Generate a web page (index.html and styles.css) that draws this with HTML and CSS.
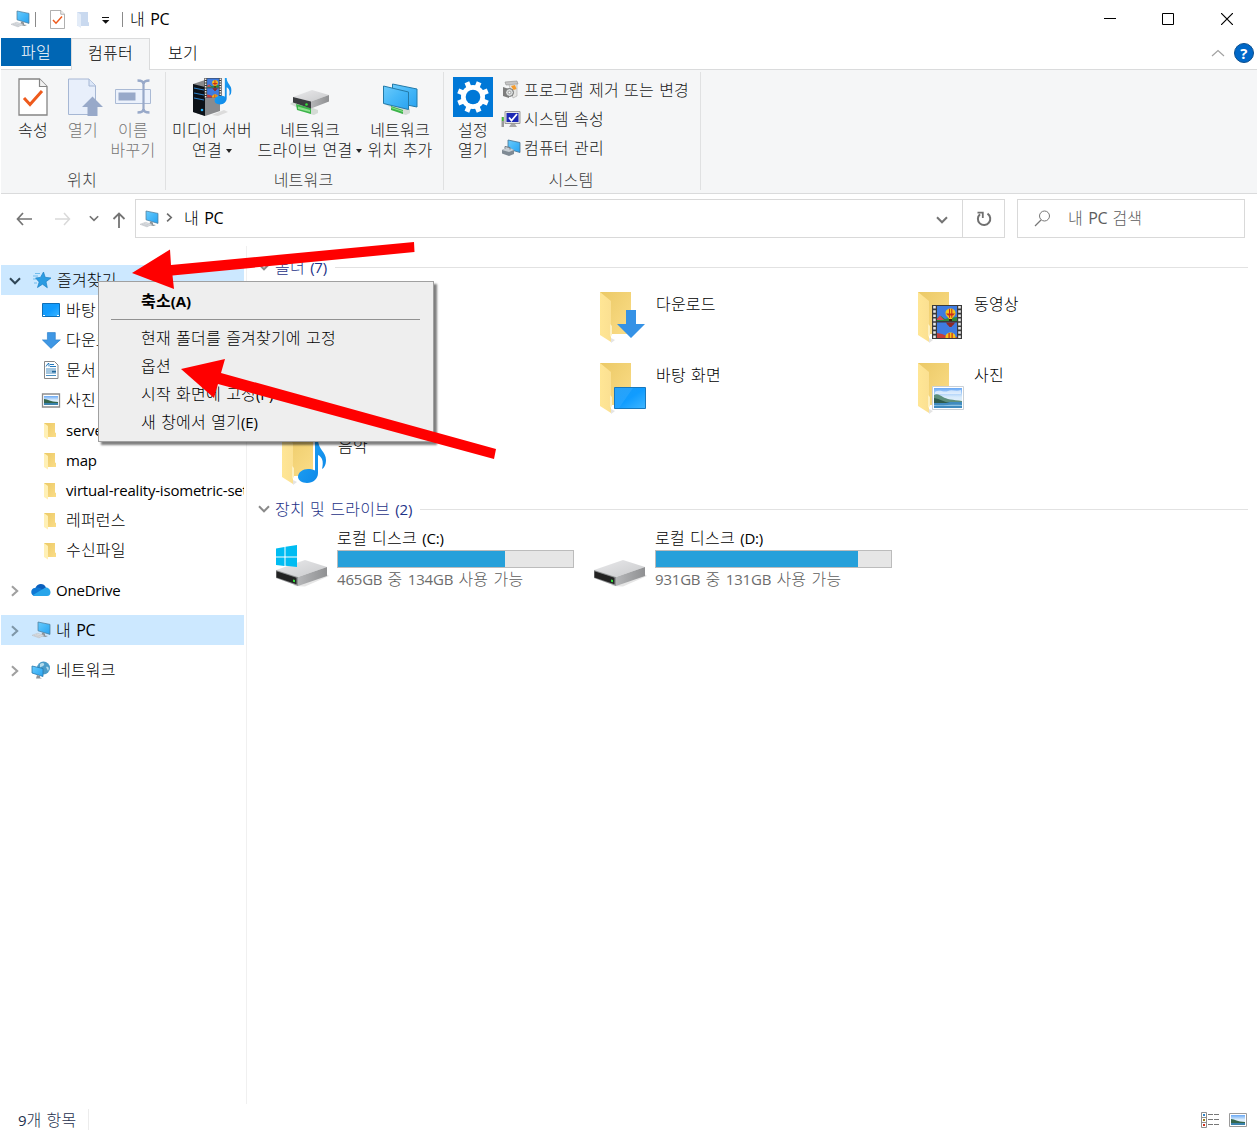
FILE: index.html
```
<!DOCTYPE html>
<html lang="ko">
<head>
    <meta charset="UTF-8">
    <meta name="viewport" content="width=device-width, initial-scale=1.0">
    <title>내 PC</title>
    <link rel="stylesheet" href="styles.css">
</head>
<body>
    <!-- shared icons -->
    <svg class="defs" width="0" height="0">
        <defs>
            <linearGradient id="gFolder" x1="0" y1="0" x2="1" y2="1"><stop offset="0" stop-color="#ebc966"/><stop offset="1" stop-color="#fbdd88"/></linearGradient>
            <linearGradient id="gFlap" x1="0" y1="0" x2="1" y2="0"><stop offset="0" stop-color="#ffe695"/><stop offset="1" stop-color="#fbe092"/></linearGradient>
            <linearGradient id="gScreen" x1="0" y1="0" x2="1" y2="1"><stop offset="0" stop-color="#6ccbfb"/><stop offset=".5" stop-color="#45b7f8"/><stop offset="1" stop-color="#2ba3f0"/></linearGradient>
            <linearGradient id="gDesk" x1="0" y1="0" x2="1" y2="1"><stop offset="0" stop-color="#169bf6"/><stop offset=".5" stop-color="#109cff"/><stop offset="1" stop-color="#3fb6ff"/></linearGradient>
            <linearGradient id="gTop" x1="0" y1="0" x2="1" y2="1"><stop offset="0" stop-color="#e9e9eb"/><stop offset="1" stop-color="#c9cacc"/></linearGradient>
            <linearGradient id="gSide" x1="0" y1="0" x2="1" y2="0"><stop offset="0" stop-color="#b5b6b8"/><stop offset="1" stop-color="#8f9092"/></linearGradient>
            <linearGradient id="gSky" x1="0" y1="0" x2="0" y2="1"><stop offset="0" stop-color="#6aa9f5"/><stop offset=".45" stop-color="#d8ebfb"/><stop offset="1" stop-color="#eef6fb"/></linearGradient>
            <linearGradient id="gNote" x1="0" y1="0" x2="1" y2="1"><stop offset="0" stop-color="#23a7f7"/><stop offset="1" stop-color="#0a84e6"/></linearGradient>
        </defs>
        <symbol id="pc" viewBox="0 0 20 18">
            <path d="M7 1l12 2.4v10L7 9.8z" fill="url(#gScreen)" stroke="#4a7896" stroke-width=".7"/>
            <path d="M11 11.500l3 1v2l3 .6-2.500.9-4-1z" fill="#8d9499"/>
            <path d="M1 14.300l5.500-2 6.500 2-5 2.600z" fill="#dfe2e5" stroke="#b4b9be" stroke-width=".5"/>
            <path d="M3 14.300l6 1.800M5 13.600l6 1.600" stroke="#b4b9be" stroke-width=".5"/>
        </symbol>
        <symbol id="folder" viewBox="0 0 14 18">
            <path d="M1 1h11v9.500l1 .5v4H1z" fill="url(#gFolder)"/>
            <path d="M1 1l4 3v13.500L1 15z" fill="#fff0b5"/>
        </symbol>
        <symbol id="folder-big" viewBox="0 0 48 52">
            <path d="M1 1h31v42H1z" fill="url(#gFolder)"/>
            <path d="M12 52l4-3-4-2z" fill="#e4e4e4"/>
            <path d="M1 1l11 9v41L1 44z" fill="url(#gFlap)"/>
            <path d="M11 33l2 2v9l-2 2z" fill="#fdf0c0"/>
        </symbol>
        <symbol id="picture" viewBox="0 0 32 24">
            <path d="M.5.5h31v23H.5z" fill="#fff" stroke="#c9d0d6"/>
            <path d="M2 2h28v20H2z" fill="url(#gSky)"/>
            <path d="M3 6c5-3 9 1 13-1s8 1 13-1v4H3z" fill="#fff" opacity=".6"/>
            <path d="M2 9c3-2 6 0 9 2s10 3 19 4v2H2z" fill="#5c8f7c"/>
            <path d="M2 16h28v6H2z" fill="#3f8bc0"/>
            <path d="M2 19c8 1 18-1 28 0v1H2z" fill="#8fc3e2"/>
            <path d="M2 12c6 1 10 4 16 5H2z" fill="#2d5b4c"/>
        </symbol>
        <symbol id="film" viewBox="0 0 30 34">
            <path d="M0 0h30v34H0z" fill="#3a3a3a"/>
            <path d="M2.500 1v32M27.500 1v32" stroke="#e8e8e8" stroke-width="2.600" stroke-dasharray="2.600 1.600"/>
            <path d="M5 1h20v15H5zM5 17.500h20V33H5z" fill="#3f7be0"/>
            <path d="M5 13l4-2 4 3 4-1 8-1v4H5z" fill="#2f8a3b"/>
            <path d="M5 14l3-3.500 4 4.500H5z" fill="#d8465a"/>
            <path d="M5 28l5 1 5 2 10 1v1H5z" fill="#c63d3a"/>
            <path d="M13.500 8c0-6 10-6 10 0 0 3-3 4-3.500 6h-3c-.5-2-3.500-3-3.500-6z" fill="#f5c518"/>
            <path d="M17 3.700h1v9h-1zM19.300 3.700h1v9h-1zM14 8.500h9l-2 2h-5z" fill="#c9281f"/><path d="M17 14h3v2h-3z" fill="#402010"/>
            <path d="M14 17.500h9c-1 2.500-3 3-3.500 4.500h-2c-.5-1.500-2.500-2-3.500-4.500z" fill="#8d2a25"/>
            <path d="M13.500 32c0-6 10-6 10 0v1h-10z" fill="#f5c518"/><path d="M16.500 28h1.200v5h-1.200zM19.500 28h1.200v5h-1.200z" fill="#c9281f"/>
        </symbol>
        <symbol id="note" viewBox="0 0 28 44">
            <path d="M17 0h3c0 9 8 12 8 20 0 5-2 8-4 9 2-8 0-12-4-14v18c0 6-5 10-11 10-5 0-9-3-9-6 0-5 5-8 10-8 3 0 6 .6 7 1.500z" fill="url(#gNote)"/>
        </symbol>
        <symbol id="drive" viewBox="0 0 54 28">
            <path d="M18 27l12 .5L54 17l-4-3z" fill="#e6e6e6"/>
            <path d="M1 11L30 1l22 7-29 10z" fill="url(#gTop)"/>
            <path d="M52 8v9L23 27v-9z" fill="url(#gSide)"/>
            <path d="M1 11l22 7v9L1 19z" fill="#8f9193"/>
            <path d="M1.500 12.300l20 6.400v6.500L1.500 18.500z" fill="#222"/>
            <path d="M18 20.500l2 .6v2.200l-2-.6z" fill="#36e03c"/>
        </symbol>
        <symbol id="down" viewBox="0 0 28 28">
            <path d="M9 0h10v14h9L14 28 0 14h9z" fill="#3592e6"/>
        </symbol>
        <symbol id="check-doc" viewBox="0 0 30 38">
            <path d="M1 1h20.500L29 8.500V37H1z" fill="#fff" stroke="#858585" stroke-width="1.300"/>
            <path d="M21.500 1v7.500H29" fill="#f2f2f2" stroke="#858585" stroke-width="1.200"/>
            <path d="M6 20l6 6.500L24 13" fill="none" stroke="#ee5a1c" stroke-width="3"/>
        </symbol>
        <symbol id="chev" viewBox="0 0 10 16"><path d="M1.500 2.500L7.500 8l-6 5.500" fill="none" stroke="currentColor" stroke-width="2.400"/></symbol>
        <symbol id="chev-down" viewBox="0 0 12 8"><path d="M1 1.300l5 5 5-5" fill="none" stroke="currentColor" stroke-width="2"/></symbol>
    </svg>

    <div class="window">
        <div class="titlebar">
            <svg class="t-pc" width="20" height="18"><use href="#pc"/></svg>
            <span class="t-sep"></span>
            <svg class="t-doc" width="15" height="19"><use href="#check-doc"/></svg>
            <svg class="t-folder" width="13" height="17" viewBox="0 0 13 17"><path d="M1 1h11v10l1 .5V15H1z" fill="#c9d9ef"/><path d="M1 1l4 2.500V17l-4-2.500z" fill="#e3ecf8"/></svg>
            <svg class="t-more" width="8" height="7" viewBox="0 0 8 7"><path d="M0 .5h7" stroke="#111"/><path d="M0 3h7.400L3.700 6.700z" fill="#111"/></svg>
            <span class="t-sep"></span>
            <span class="t-name">내 <span class="en pc">PC</span></span>
            <div class="controls">
                <svg width="12" height="12"><path d="M0 5.500h12" stroke="#000"/></svg>
                <svg width="12" height="12"><path d="M.5.5h11v11H.5z" fill="none" stroke="#000"/></svg>
                <svg class="close" width="12" height="12"><path d="M0 0l12 12M12 0L0 12" stroke="#000" stroke-width="1.200"/></svg>
            </div>
        </div>

        <div class="tabs">
            <div class="tab file">파일</div>
            <div class="tab active">컴퓨터</div>
            <div class="tab">보기</div>
            <div class="tabs-right">
                <svg width="14" height="8" viewBox="0 0 14 8"><path d="M1 7l6-5.500L13 7" fill="none" stroke="#a2a2a2" stroke-width="1.200"/></svg>
                <span class="help">?</span>
            </div>
        </div>

        <div class="ribbon">
            <div class="group g-place">
                <div class="buttons">
                    <div class="btn"><svg width="30" height="38"><use href="#check-doc"/></svg><span>속성</span></div>
                    <div class="btn off">
                        <svg class="open-doc" width="36" height="38" viewBox="0 0 36 38"><path d="M1.500 1h20.500L28.500 7.500V36.500h-27z" fill="#e8effb" stroke="#a6b7d4"/><path d="M22 1v7h6.500" fill="#dce7f8" stroke="#a6b7d4"/><path d="M25.500 18.500L36 29h-5.500v9H20.500V29H15z" fill="#98a9c9"/></svg>
                        <span>열기</span>
                    </div>
                    <div class="btn off">
                        <svg width="38" height="38" viewBox="0 0 38 38"><path d="M1.500 11.500h35v14h-35z" fill="#ecf2fc" stroke="#aabad5"/><path d="M4.500 14.500h17v8h-17z" fill="#98a9c9"/><path d="M29.500 5v29" stroke="#98a9c9" stroke-width="2.200"/><path d="M23.500 2.500c3.500 0 6 1 6 3.500 0-2.500 2.500-3.500 6-3.500M23.500 34.500c3.500 0 6-1 6-3.500 0 2.500 2.500 3.500 6 3.500" fill="none" stroke="#98a9c9" stroke-width="2.600"/></svg>
                        <span>이름<br>바꾸기</span>
                    </div>
                </div>
                <div class="group-name">위치</div>
            </div>
            <div class="group g-net">
                <div class="buttons">
                    <div class="btn w90">
                        <svg width="40" height="38" viewBox="0 0 40 38">
                            <path d="M20 37l12-5 4 2-10 4z" fill="#dcdcdc"/>
                            <path d="M1 6l12-4 15 3v28l-15 5-12-4z" fill="#8a8b8e"/>
                            <path d="M1 6l12 3v29L1 34z" fill="#0d1218"/>
                            <path d="M2 10l10 2M2 15l10 2M2 20l10 2" stroke="#2b7fc7" stroke-width="1.200"/>
                            <circle cx="10" cy="32" r="1.300" fill="#29b6ff"/>
                            <svg x="12" y="0" width="18" height="20" viewBox="0 0 30 34"><use href="#film"/></svg>
                            <svg x="22" y="0" width="18" height="27" viewBox="0 0 28 44"><use href="#note"/></svg>
                        </svg>
                        <span>미디어 서버<br>연결<i class="caret"></i></span>
                    </div>
                    <div class="btn w106">
                        <svg width="42" height="38" viewBox="0 0 42 38">
                            <path d="M1 26l4-3 24 9v3l-4 2-4-1z" fill="#d4dbd5"/>
                            <path d="M7 26l15 4v6L8 32z" fill="#3cb44a"/><path d="M9 28.500l12 3.500v2L9 31z" fill="#8de08c"/>
                            <path d="M4 19l19-7 17 5-18 6.500z" fill="url(#gTop)"/><path d="M40 17v6.500l-18 7v-7z" fill="url(#gSide)"/><path d="M4 19l18 4.500v7L4 24.500z" fill="#3a3c3f"/><circle cx="17.500" cy="26.500" r="1.300" fill="#34e03a"/>
                        </svg>
                        <span>네트워크<br>드라이브 연결<i class="caret"></i></span>
                    </div>
                    <div class="btn w74">
                        <svg width="38" height="38" viewBox="0 0 38 38">
                            <path d="M2 25l4-2 23 8v4l-4 2-4-1z" fill="#d4dbd5"/>
                            <path d="M10 28l12 4v4l-12-4z" fill="#3cb44a"/><path d="M10 29l12 4v1l-12-4z" fill="#8de08c"/>
                            <path d="M11.500 6l24.500 5v18l-24.500-5z" fill="url(#gScreen)" stroke="#237aa8"/>
                            <path d="M2.500 8l25 6v17.500l-25-6z" fill="url(#gScreen)" stroke="#237aa8"/>
                        </svg>
                        <span>네트워크<br>위치 추가</span>
                    </div>
                </div>
                <div class="group-name">네트워크</div>
            </div>
            <div class="group g-sys">
                <div class="buttons">
                    <div class="btn gear">
                        <svg width="40" height="40" viewBox="-20 -20 40 40">
                            <path d="M-20-20h40v40h-40z" fill="#0078d7"/>
                            <path d="M0-16v32M-16 0h32M-11.300-11.300l22.600 22.600M-11.300 11.300l22.600-22.600" stroke="#fff" stroke-width="5" transform="rotate(22.500)"/>
                            <circle r="12" fill="#fff"/><circle r="7.300" fill="#0078d7"/>
                        </svg>
                        <span>설정<br>열기</span>
                    </div>
                    <div class="list">
                        <div class="line">
                            <svg width="20" height="20" viewBox="0 0 20 20"><path d="M4 2l12-1 1 3-12 1z" fill="#c6c6c6" stroke="#8e8e8e" stroke-width=".6"/><path d="M8 5l8-1v12l-4 2z" fill="#e5e5e3" stroke="#a9a9a9" stroke-width=".6"/><path d="M10 6l4-1 1.500 4-3 1z" fill="#f39a2d"/><path d="M2 7l6 2v9l-6-2z" fill="#7d7d7d"/><circle cx="8.500" cy="12.500" r="4" fill="#d6d9d9" stroke="#6e6e6e"/><circle cx="8.500" cy="12.500" r="1.300" fill="#fff" stroke="#777" stroke-width=".6"/></svg>
                            <span>프로그램 제거 또는 변경</span>
                        </div>
                        <div class="line">
                            <svg width="20" height="20" viewBox="0 0 20 20"><path d="M.5 8h2.500v10H.5z" fill="#9a9a9a"/><path d="M1 8h1.500v4H1z" fill="#3ec52f"/><path d="M4 2.500h15v12H4z" fill="#e4e4e4" stroke="#9b9b9b"/><path d="M5.500 4h12v9h-12z" fill="#1c28b4"/><path d="M8 8.500l2.500 3L16 5" fill="none" stroke="#fff" stroke-width="1.800"/><path d="M10 15h4l2 3H8z" fill="#a8a8a8"/></svg>
                            <span>시스템 속성</span>
                        </div>
                        <div class="line">
                            <svg width="20" height="20" viewBox="0 0 20 20"><path d="M7 2l12 2.500v10L7 11z" fill="url(#gScreen)" stroke="#47718f" stroke-width=".8"/><path d="M1 12l6-3 6 3v4l-5 2-7-2.500z" fill="#7f8a94"/><path d="M1 12l7 2 5-2-6-3z" fill="#c7ced4"/><path d="M4 10.500V8.500l5 1v2" fill="none" stroke="#6f7880"/></svg>
                            <span>컴퓨터 관리</span>
                        </div>
                    </div>
                </div>
                <div class="group-name">시스템</div>
            </div>
        </div>

        <div class="nav">
            <div class="nav-arrows">
                <svg width="16" height="14" viewBox="0 0 16 14"><path d="M7 1L1.500 7 7 13M1.500 7H16" fill="none" stroke="#747474" stroke-width="1.700"/></svg>
                <svg width="16" height="14" viewBox="0 0 16 14"><path d="M9 1l5.500 6L9 13M14.500 7H0" fill="none" stroke="#d9d9d9" stroke-width="1.500"/></svg>
                <svg class="recent" width="10" height="7"><use href="#chev-down"/></svg>
                <svg class="up" width="14" height="16" viewBox="0 0 14 16"><path d="M1.500 7L7 1.500 12.500 7M7 1.500V16" fill="none" stroke="#747474" stroke-width="1.800"/></svg>
            </div>
            <div class="address">
                <svg width="20" height="18"><use href="#pc"/></svg>
                <svg class="crumb" width="7" height="11"><use href="#chev"/></svg>
                <span class="path">내 <span class="en pc">PC</span></span>
                <svg class="drop" width="12" height="8"><use href="#chev-down"/></svg>
                <div class="refresh">
                    <svg width="16" height="16" viewBox="0 0 16 16"><path d="M11.500 2.700a6.200 6.200 0 1 1-7.500.5" fill="none" stroke="#707070" stroke-width="2"/><path d="M1.500 1.700h5.300v5.300" fill="none" stroke="#707070" stroke-width="1.800"/></svg>
                </div>
            </div>
            <div class="search">
                <svg width="17" height="17" viewBox="0 0 17 17"><circle cx="10.500" cy="6" r="5" fill="none" stroke="#777"/><path d="M7 10L1 16" stroke="#777" stroke-width="1.200"/></svg>
                <span>내 <span class="en pc">PC</span> 검색</span>
            </div>
        </div>

        <div class="content">
            <div class="sidebar">
                <div class="row top selected">
                    <svg class="open" width="12" height="8"><use href="#chev-down"/></svg>
                    <svg width="20" height="18" viewBox="0 0 20 18"><path d="M11.500 1l1.700 5.300 5.800.7-5 3.700 1.300 6-4.800-3.500-5 3.300L7.200 11 3.500 7l5-.6z" fill="#2b9ce2" stroke="#1b7fc4" stroke-width=".7"/><path d="M3 2.500h5M1 5h5M1 8h3M2 12h3" stroke="#5bb1e8" stroke-width=".8"/></svg>
                    <span>즐겨찾기</span>
                </div>
                <div class="row sub"><svg width="20" height="16" viewBox="0 0 20 16"><path d="M1.500 1.500h17v13h-17z" fill="url(#gDesk)" stroke="#0d6fb8"/><path d="M2 13.500h16" stroke="#fff" stroke-dasharray="2 12"/></svg><span>바탕 화면</span></div>
                <div class="row sub"><svg width="20" height="17" viewBox="0 0 28 28" preserveAspectRatio="none"><path d="M9 1h11v12h7L14 27 2 13h7z" fill="#3f97e4" stroke="#2a7fcc"/></svg><span>다운로드</span></div>
                <div class="row sub"><svg width="20" height="20" viewBox="0 0 20 20"><path d="M3.500 1.500h10l3.500 3.500v13.500H3.500z" fill="#fff" stroke="#878787"/><path d="M5 9h10M5 11h6M5 13h10M5 15.500h10" stroke="#4a8ec0"/><path d="M5 6.500L7 3.500h1v3M9 4.500h4M9 6.500h6" fill="none" stroke="#2378bd"/><path d="M11 10.500h4v2h-4z" fill="#23689c"/></svg><span>문서</span></div>
                <div class="row sub"><svg width="20" height="15" viewBox="0 0 20 15"><path d="M1.500 1h17v13h-17z" fill="#fff" stroke="#8d8d8d" stroke-width="1.300"/><path d="M3 3h14v9H3z" fill="url(#gSky)"/><path d="M3 6c4 0 6 3 14 3v1.500H3z" fill="#35664c"/><path d="M3 10h14v2H3z" fill="#3b83ad"/></svg><span>사진</span></div>
                <div class="row sub"><svg class="f" width="14" height="18"><use href="#folder"/></svg><span class="en">server</span></div>
                <div class="row sub"><svg class="f" width="14" height="18"><use href="#folder"/></svg><span class="en">map</span></div>
                <div class="row sub"><svg class="f" width="14" height="18"><use href="#folder"/></svg><span class="en">virtual-reality-isometric-set</span></div>
                <div class="row sub"><svg class="f" width="14" height="18"><use href="#folder"/></svg><span>레퍼런스</span></div>
                <div class="row sub"><svg class="f" width="14" height="18"><use href="#folder"/></svg><span>수신파일</span></div>
                <div class="row top gap">
                    <svg class="closed" width="10" height="14"><use href="#chev"/></svg>
                    <svg width="20" height="14" viewBox="0 0 20 14"><path d="M4.500 5C6 0 13-.5 15 4.500L10 9H1z" fill="#0a5fbd"/><path d="M4 5c3-1.200 5 0 7 1.200L6 13H4C-1 13-1 5 4 5z" fill="#0f78d4"/><path d="M11 6.500l4-2c5 0 6.500 8.500 1 8.500H5c-1.500 0-2.500-.5-3-1z" fill="#28a5ea"/></svg>
                    <span class="en">OneDrive</span>
                </div>
                <div class="row top gap selected">
                    <svg class="closed dark" width="10" height="14"><use href="#chev"/></svg>
                    <svg width="20" height="18"><use href="#pc"/></svg>
                    <span>내 <span class="en pc">PC</span></span>
                </div>
                <div class="row top gap">
                    <svg class="closed" width="10" height="14"><use href="#chev"/></svg>
                    <svg width="20" height="18" viewBox="0 0 20 18"><circle cx="12.500" cy="7" r="6.500" fill="#4b9cc9"/><path d="M9 3c2-2 5-1 4 1s-3 1-4 3zM15 6c2-1 4 1 2 4z" fill="#b4dcec"/><path d="M1 5l11 2.500v8L1 12z" fill="url(#gScreen)" stroke="#2679ad" stroke-width=".8"/><path d="M6 14l3 1v1.500l2 1H5z" fill="#8d9499"/></svg>
                    <span>네트워크</span>
                </div>
            </div>

            <div class="main">
                <div class="heading"><svg width="12" height="8"><use href="#chev-down"/></svg><span>폴더 <span class="en">(7)</span></span><hr></div>
                <div class="folders">
                    <div class="item c2"><svg width="50" height="52" viewBox="0 0 50 52"><svg width="48" height="52"><use href="#folder-big"/></svg><svg x="18" y="19" width="28" height="28"><use href="#down"/></svg></svg><span>다운로드</span></div>
                    <div class="item c3"><svg width="50" height="52" viewBox="0 0 50 52"><svg width="48" height="52"><use href="#folder-big"/></svg><svg x="15" y="14" width="30" height="34"><use href="#film"/></svg></svg><span>동영상</span></div>
                    <div class="item c2"><svg width="50" height="52" viewBox="0 0 50 52"><svg width="48" height="52"><use href="#folder-big"/></svg><path d="M15.500 25.500h31v21h-31z" fill="url(#gDesk)" stroke="#1878bd"/><path d="M16 26h18L20 46h-4z" fill="#fff" opacity=".08"/></svg><span>바탕 화면</span></div>
                    <div class="item c3"><svg width="50" height="52" viewBox="0 0 50 52"><svg width="48" height="52"><use href="#folder-big"/></svg><svg x="15" y="24" width="32" height="24"><use href="#picture"/></svg></svg><span>사진</span></div>
                    <div class="item c1"><svg width="50" height="52" viewBox="0 0 50 52"><svg width="48" height="52"><use href="#folder-big"/></svg><svg x="17" y="7" width="28" height="44"><use href="#note"/></svg></svg><span>음악</span></div>
                </div>
                <div class="heading second"><svg width="12" height="8"><use href="#chev-down"/></svg><span>장치 및 드라이브 <span class="en">(2)</span></span><hr></div>
                <div class="drives">
                    <div class="drive">
                        <svg width="54" height="42" viewBox="0 0 54 42"><svg y="14" width="54" height="28"><use href="#drive"/></svg><path d="M1 3.500L9.500 2v9.500H1zM10.500 1.800L22 0v11.500H10.500zM1 12.500h8.500V21L1 20zM10.500 12.500H22V22l-11.500-1.200z" fill="#00bcf2"/></svg>
                        <div class="info">
                            <div>로컬 디스크 <span class="en">(C:)</span></div>
                            <div class="bar"><div class="used" style="width: 71.2%"></div></div>
                            <div class="free"><span class="en">465GB</span> 중 <span class="en">134GB</span> 사용 가능</div>
                        </div>
                    </div>
                    <div class="drive">
                        <svg width="54" height="42" viewBox="0 0 54 42"><svg y="14" width="54" height="28"><use href="#drive"/></svg></svg>
                        <div class="info">
                            <div>로컬 디스크 <span class="en">(D:)</span></div>
                            <div class="bar"><div class="used" style="width: 86%"></div></div>
                            <div class="free"><span class="en">931GB</span> 중 <span class="en">131GB</span> 사용 가능</div>
                        </div>
                    </div>
                </div>
            </div>
        </div>

        <div class="status">
            <span class="count"><span class="en">9</span>개 항목</span>
            <div class="views">
                <svg width="18" height="16" viewBox="0 0 18 16"><path d="M.5.5h5v15h-5zM.5 5.500h5M.5 10.500h5" fill="#fff" stroke="#8f8f8f"/><path d="M2 2h2v2H2z" fill="#2f86c9"/><path d="M2 7h2v2H2z" fill="#9a7d1c"/><path d="M2 12h2v2H2z" fill="#d0311d"/><path d="M7 2.500h5M13 2.500h5M7 7.500h5M13 7.500h5M7 12.500h5M13 12.500h5" stroke="#777"/></svg>
                <svg width="18" height="14" viewBox="0 0 18 14"><path d="M.5.5h17v13H.5z" fill="#fff" stroke="#9a9a9a"/><path d="M2 2h14v10H2z" fill="url(#gSky)"/><path d="M2 6c4 0 6 3 14 3v1H2z" fill="#35664c"/><path d="M2 10h14v2H2z" fill="#3b83ad"/></svg>
            </div>
        </div>
    </div>

    <div class="menu">
        <div class="menu-item bold">축소<span class="en">(A)</span></div>
        <hr>
        <div class="menu-item">현재 폴더를 즐겨찾기에 고정</div>
        <div class="menu-item">옵션</div>
        <div class="menu-item">시작 화면에 고정<span class="en">(P)</span></div>
        <div class="menu-item">새 창에서 열기<span class="en">(E)</span></div>
    </div>

    <!-- red arrows over everything -->
    <svg class="arrows" width="1258" height="1135">
        <path d="M132 273l38-23.500 1 15.500L414 242l.5 10L172.500 275.500 174 289z" fill="#f00"/>
        <path d="M181 369l44-10-4 14 275 76-2 10-276-75-4 14z" fill="#f00"/>
    </svg>
</body>
</html>
```
FILE: styles.css
```
* {
    box-sizing: border-box;
}
body {
    margin: 0;
    font-family: "Noto Sans CJK KR", sans-serif;
    font-size: 16px;
    font-weight: 300;
    line-height: 20px;
    letter-spacing: 0.2px;
    word-spacing: 0.6px;
    color: #000;
    background-color: #fff;
    overflow: hidden;
}
svg {
    display: block;
    flex-shrink: 0;
}
.defs {
    position: absolute;
}
.en {
    font-family: "Open Sans", sans-serif;
    font-size: 15px;
    font-weight: 400;
    letter-spacing: -0.2px;
}
.en.pc {
    font-size: 16px;
    letter-spacing: -0.4px;
}
.window {
    display: flex;
    flex-direction: column;
    height: 1135px;
    padding: 0 1px;
    white-space: nowrap;
}

/* title bar */
.titlebar {
    display: flex;
    align-items: center;
    height: 38px;
    padding-left: 9px;
}
.t-sep {
    width: 1px;
    height: 15px;
    background-color: #8a8a8a;
}
.t-pc {
    margin-right: 5px;
}
.t-doc {
    margin-left: 14px;
}
.t-folder {
    margin-left: 11px;
}
.t-more {
    margin: 3px 12px 0 13px;
}
.t-name {
    margin-left: 7px;
    padding-bottom: 2px;
}
.controls {
    display: flex;
    gap: 46px;
    margin-left: auto;
    padding-right: 24px;
}
.close {
    margin-left: 1px;
}

/* tabs */
.tabs {
    display: flex;
    height: 32px;
    border-bottom: 1px solid #dadbdc;
}
.tab {
    height: 28px;
    line-height: 28px;
    padding: 0 18px;
}
.tab.file {
    width: 70px;
    padding: 0;
    line-height: 26px;
    text-align: center;
    color: #fff;
    background-color: #0066b4;
}
.tab.active {
    width: 79px;
    height: 32px;
    padding: 0;
    line-height: 26px;
    text-align: center;
    background-color: #f5f6f7;
    border: 1px solid #dadbdc;
    border-bottom: 0;
}
.tabs-right {
    display: flex;
    align-items: center;
    gap: 9px;
    height: 30px;
    margin-left: auto;
    padding-right: 3px;
}
.help {
    width: 20px;
    height: 20px;
    border: 1px solid #0b4f8f;
    border-radius: 50%;
    background-color: #0068c8;
    color: #fff;
    font: bold 15px/18px "Open Sans", sans-serif;
    text-align: center;
}

/* ribbon */
.ribbon {
    display: flex;
    height: 124px;
    padding-top: 2px;
    background-color: #f5f6f7;
    border-bottom: 1px solid #dadbdc;
    color: #1a1a1a;
}
.group {
    display: flex;
    flex-direction: column;
    height: 118px;
    border-right: 1px solid #e0e1e2;
}
.g-place {
    width: 165px;
}
.g-net {
    width: 278px;
}
.g-sys {
    width: 257px;
}
.buttons {
    display: flex;
    height: 97px;
    padding: 6px 0 0 7px;
}
.g-net .buttons {
    padding-left: 1px;
}
.g-sys .buttons {
    padding-left: 6px;
}
.btn {
    display: flex;
    flex-direction: column;
    align-items: center;
    width: 50px;
    text-align: center;
}
.btn span {
    margin-top: 3px;
}
.btn.off {
    color: #757575;
}
.open-doc {
    margin-left: 4px;
}
.btn.w90 {
    width: 90px;
}
.btn.w106 {
    width: 106px;
}
.btn.w74 {
    width: 74px;
}
.btn.gear {
    width: 46px;
    margin-top: -1px;
}
.btn.gear span {
    margin-top: 2px;
}
.caret {
    display: inline-block;
    margin: 0 0 3px 4px;
    border: 3.5px solid transparent;
    border-top: 4px solid #262626;
    border-bottom: 0;
}
.list {
    padding-left: 5px;
}
.line {
    display: flex;
    align-items: center;
    gap: 3px;
    height: 29px;
}
.line:first-child {
    margin-top: -3px;
}
.line span {
    padding-bottom: 2px;
}
.group-name {
    padding-right: 2px;
    text-align: center;
    color: #3c3c3c;
}

/* address row */
.nav {
    display: flex;
    height: 52px;
    padding: 5px 12px 0 0;
}
.nav-arrows {
    display: flex;
    align-items: center;
    width: 134px;
    height: 39px;
    padding-left: 15px;
    gap: 23px;
}
.recent {
    margin-left: -5px;
    color: #747474;
}
.up {
    margin: 2px 0 0 -10px;
}
.address {
    display: flex;
    align-items: center;
    width: 870px;
    height: 39px;
    padding-left: 3px;
    border: 1px solid #d9d9d9;
}
.crumb {
    margin: 0 11px 3px 7px;
    color: #6b6b6b;
}
.path,
.search span {
    padding-bottom: 2px;
}
.path .en,
.search .en {
    padding: 0;
}
.drop {
    margin: 2px 14px 0 auto;
    color: #747474;
}
.refresh {
    display: flex;
    align-items: center;
    width: 42px;
    height: 37px;
    padding-left: 13px;
    border-left: 1px solid #d9d9d9;
}
.search {
    display: flex;
    align-items: center;
    gap: 17px;
    flex: 1;
    height: 39px;
    margin-left: 12px;
    padding-left: 16px;
    border: 1px solid #d9d9d9;
    color: #5d5d5d;
}

/* content */
.content {
    display: flex;
    height: 858px;
}
.sidebar {
    width: 246px;
    padding: 19px 2px 0 0;
    border-right: 1px solid #f0f0f0;
}
.row {
    display: flex;
    align-items: center;
    height: 30px;
    overflow: hidden;
}
.row > span {
    margin-left: 5px;
    padding-bottom: 2px;
}
.row > .en {
    padding-bottom: 0;
}
.row.top {
    padding-left: 8px;
}
.row.sub {
    padding-left: 40px;
}
.row.gap {
    margin-top: 10px;
}
.row.selected {
    background-color: #cce8ff;
}
.open {
    margin: 2px 11px 0 0;
    color: #2f4657;
}
.closed {
    margin: 2px 11px 0 1px;
    color: #a0a0a0;
}
.closed.dark {
    color: #7f97a8;
}
.f {
    margin: 1px 4px 0 2px;
}
.main {
    flex: 1;
    padding: 11px 9px 0 11px;
}
.heading {
    display: flex;
    align-items: center;
    height: 20px;
    color: #1e3287;
}
.heading > span {
    padding-bottom: 2px;
}
.heading svg {
    margin-right: 5px;
    color: #8a8a8a;
}
.heading hr {
    flex: 1;
    height: 1px;
    margin: 0 0 0 8px;
    border: 0;
    background-color: #e2e2e2;
}
.folders {
    display: grid;
    grid-template-columns: repeat(3, 318px);
    grid-auto-rows: 71px;
    padding: 14px 0 0 23px;
}
.item {
    display: flex;
    gap: 7px;
}
.item span {
    margin-top: 2px;
}
.c1 {
    grid-column: 1;
}
.c2 {
    grid-column: 2;
}
.c3 {
    grid-column: 3;
}
.heading.second {
    margin-top: -5px;
}
.drives {
    display: flex;
    padding: 8px 0 0 17px;
}
.drive {
    display: flex;
    gap: 8px;
    width: 318px;
}
.drive > svg {
    margin-top: 18px;
}
.info {
    width: 237px;
}
.bar {
    height: 18px;
    margin: 2px 0 0;
    border: 1px solid #bcbcbc;
    background-color: #e6e6e6;
}
.used {
    height: 100%;
    background-color: #26a0da;
}
.free {
    color: #5d5d5d;
}
.free .en {
    color: #6d6d6d;
}

/* status bar */
.status {
    display: flex;
    align-items: center;
    height: 31px;
    padding: 0 10px 0 17px;
    color: #1e2f4d;
}
.count {
    padding-right: 12px;
    border-right: 1px solid #ececec;
}
.views {
    display: flex;
    align-items: center;
    gap: 10px;
    margin-left: auto;
}

/* context menu */
.menu {
    position: absolute;
    left: 98px;
    top: 281px;
    width: 336px;
    height: 161px;
    padding: 4px 0 0 42px;
    border: 1px solid #a0a0a0;
    background-color: #eee;
    box-shadow: 3px 3px 2px rgba(0, 0, 0, 0.5);
    white-space: nowrap;
}
.menu hr {
    width: 309px;
    height: 1px;
    margin: 5px 0 3px -30px;
    border: 0;
    background-color: #919191;
}
.menu-item {
    height: 28px;
    line-height: 28px;
}
.bold,
.bold .en {
    font-weight: bold;
}
.arrows {
    position: absolute;
    left: 0;
    top: 0;
}
```
